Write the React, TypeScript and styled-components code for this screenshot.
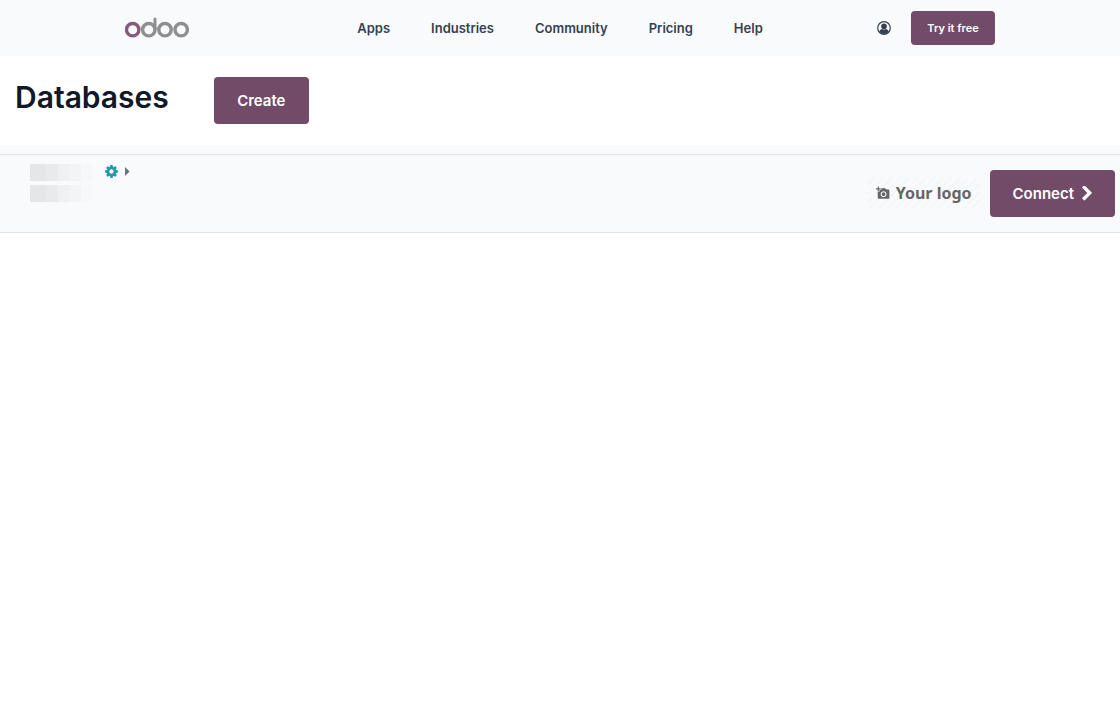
import React from "react";
import styled, { createGlobalStyle } from "styled-components";
import { MdAddAPhoto } from "react-icons/md";

const GlobalStyle = createGlobalStyle`
  *, *::before, *::after { box-sizing: border-box; }
  body {
    margin: 0;
    background: #fff;
    color: #0f172a;
    font-family: Inter, "Liberation Sans", sans-serif;
  }
`;

const Header = styled.header`
  display: grid;
  grid-template-columns: 1fr auto 1fr;
  align-items: center;
  height: 56px;
  padding: 0 125px;
  background: #f9fafc;
`;

const LogoLink = styled.a`
  display: flex;
  justify-self: start;
`;

const Nav = styled.nav`
  display: flex;
  gap: 41px;
`;

const NavLink = styled.a`
  color: #374151;
  font-size: 13px;
  font-weight: 600;
  line-height: 20px;
  text-decoration: none;
`;

const Account = styled.div`
  display: flex;
  align-items: center;
  justify-self: end;
  gap: 20px;
`;

const IconButton = styled.button<{ $color: string }>`
  display: flex;
  padding: 0;
  border: 0;
  background: none;
  color: ${(p) => p.$color};
  cursor: pointer;
`;

const Button = styled.button<{ $size?: "small" | "large" }>`
  display: inline-flex;
  align-items: center;
  justify-content: center;
  gap: 8px;
  min-width: ${(p) => (p.$size === "small" ? 84 : 95)}px;
  height: ${(p) => (p.$size === "small" ? 34 : 47)}px;
  padding: 0 ${(p) => (p.$size === "small" ? 16 : 23)}px;
  border: 0;
  border-radius: 4px;
  background: #714b67;
  color: #fff;
  font-family: inherit;
  font-size: ${(p) => (p.$size === "small" ? 11 : 15)}px;
  font-weight: 600;
  white-space: nowrap;
  cursor: pointer;
`;

const TitleBar = styled.div`
  display: flex;
  align-items: flex-start;
  gap: 45px;
  padding: 21px 15px;
`;

const Title = styled.h1`
  margin: 0;
  color: #111827;
  font-size: 30px;
  font-weight: 600;
  line-height: 40px;
`;

const List = styled.ul`
  margin: 0;
  padding: 9px 0 0;
  background: #f9fafc;
  list-style: none;
`;

const Row = styled.li`
  display: flex;
  justify-content: space-between;
  align-items: flex-start;
  height: 79px;
  padding: 15px 5px 15px 30px;
  border-top: 1px solid #e2e5e8;
  border-bottom: 1px solid #e2e5e8;
`;

const Database = styled.div`
  display: flex;
  align-items: flex-start;
  gap: 12px;
  margin-top: -6px;
`;

const Redacted = styled.div`
  display: grid;
  gap: 4px;
  width: 62px;
`;

const RedactedLine = styled.span`
  height: 17px;
  background: linear-gradient(
    to right,
    #e5e6e8 0 16px,
    #e9eaec 16px 28px,
    #eff0f2 28px 39px,
    #f3f4f6 39px 51px,
    #f7f8fa 51px
  );
`;

const Controls = styled.div`
  display: flex;
  align-items: center;
  gap: 6px;
`;

const Actions = styled.div`
  display: flex;
  align-items: center;
  gap: 10px;
`;

const YourLogo = styled.button`
  display: flex;
  align-items: center;
  gap: 6px;
  height: 31px;
  padding: 0 8px 2px;
  border: 0;
  background: repeating-linear-gradient(135deg, #f9fafc 0 4px, #f5f6f8 4px 6px);
  color: #666;
  font-family: "Noto Sans", "Liberation Sans", sans-serif;
  font-size: 16px;
  font-weight: 700;
  white-space: nowrap;
  cursor: pointer;
`;

function OdooLogo() {
  return (
    <svg width="64" height="22" viewBox="0 0 64 22" fill="none" strokeWidth="3.4" role="img" aria-label="odoo">
      <circle cx="7.7" cy="12.7" r="6.2" stroke="#875a7b" />
      <g stroke="#8f8f8f">
        <circle cx="23.8" cy="12.7" r="6.2" />
        <circle cx="40" cy="12.7" r="6.2" />
        <circle cx="56.2" cy="12.7" r="6.2" />
        <path d="M30 12.7V2" strokeWidth="3" strokeLinecap="round" />
      </g>
    </svg>
  );
}

function UserIcon() {
  return (
    <svg width="14" height="14" viewBox="0 0 14 14" aria-hidden="true">
      <circle cx="7" cy="7" r="6.3" fill="none" stroke="currentColor" strokeWidth="1.2" />
      <circle cx="7" cy="5.4" r="2.8" fill="currentColor" />
      <path d="M2.2 10.7C3 9 4 8.3 5.1 8.1a3.4 3.4 0 0 0 3.8 0c1.1.2 2.1.9 2.9 2.6A6.1 6.1 0 0 1 7 13a6.1 6.1 0 0 1-4.8-2.3Z" fill="currentColor" />
    </svg>
  );
}

function CogIcon() {
  return (
    <svg width="15" height="15" viewBox="0 0 1792 1792" fill="currentColor" aria-hidden="true">
      <path d="M1152 896q0-106-75-181t-181-75-181 75-75 181 75 181 181 75 181-75 75-181zm512-109v222q0 12-8 23t-20 13l-185 28q-19 54-39 91 35 50 107 138 10 12 10 25t-9 23q-27 37-99 108t-94 71q-12 0-26-9l-138-108q-44 23-91 38-16 136-29 186-7 28-36 28h-222q-14 0-24.5-8.5t-11.5-21.5l-28-184q-49-16-90-37l-141 107q-10 9-25 9-14 0-25-11-126-114-165-168-7-10-7-23 0-12 8-23 15-21 51-66.5t54-70.5q-27-50-41-99l-183-27q-13-2-21-12.5t-8-23.5v-222q0-12 8-23t19-13l186-28q14-46 39-92-40-57-107-138-10-12-10-24 0-10 9-23 26-36 98.5-107.5t94.5-71.5q13 0 26 10l138 107q44-23 91-38 16-136 29-186 7-28 36-28h222q14 0 24.5 8.5t11.5 21.5l28 184q49 16 90 37l142-107q9-9 24-9 13 0 25 10 129 119 165 170 7 8 7 22 0 12-8 23-15 21-51 66.5t-54 70.5q26 50 41 98l183 28q13 2 21 12.5t8 23.5z" />
    </svg>
  );
}

function CaretIcon() {
  return (
    <svg width="5" height="9" viewBox="0 0 5 9" fill="currentColor" aria-hidden="true">
      <path d="M0 0l4.6 4.5L0 9z" />
    </svg>
  );
}

function ChevronIcon() {
  return (
    <svg width="10" height="15" viewBox="320 128 1072 1536" fill="currentColor" aria-hidden="true">
      <path d="M1363 877l-742 742q-19 19-45 19t-45-19l-166-166q-19-19-19-45t19-45l531-531-531-531q-19-19-19-45t19-45l166-166q19-19 45-19t45 19l742 742q19 19 19 45t-19 45z" />
    </svg>
  );
}

const links = ["Apps", "Industries", "Community", "Pricing", "Help"];

export default function App() {
  return (
    <>
      <GlobalStyle />
      <Header>
        <LogoLink href="#home">
          <OdooLogo />
        </LogoLink>
        <Nav aria-label="Main">
          {links.map((label) => (
            <NavLink key={label} href={`#${label.toLowerCase()}`}>
              {label}
            </NavLink>
          ))}
        </Nav>
        <Account>
          <IconButton $color="#374151" aria-label="Account">
            <UserIcon />
          </IconButton>
          <Button $size="small">Try it free</Button>
        </Account>
      </Header>
      <main>
        <TitleBar>
          <Title>Databases</Title>
          <Button>Create</Button>
        </TitleBar>
        <List>
          <Row>
            <Database>
              <Redacted aria-hidden="true">
                <RedactedLine />
                <RedactedLine />
              </Redacted>
              <Controls>
                <IconButton $color="#2797aa" aria-label="Settings">
                  <CogIcon />
                </IconButton>
                <IconButton $color="#6b7280" aria-label="Show details">
                  <CaretIcon />
                </IconButton>
              </Controls>
            </Database>
            <Actions>
              <YourLogo>
                <MdAddAPhoto size={14} aria-hidden="true" />
                Your logo
              </YourLogo>
              <Button>
                Connect
                <ChevronIcon />
              </Button>
            </Actions>
          </Row>
        </List>
      </main>
    </>
  );
}
